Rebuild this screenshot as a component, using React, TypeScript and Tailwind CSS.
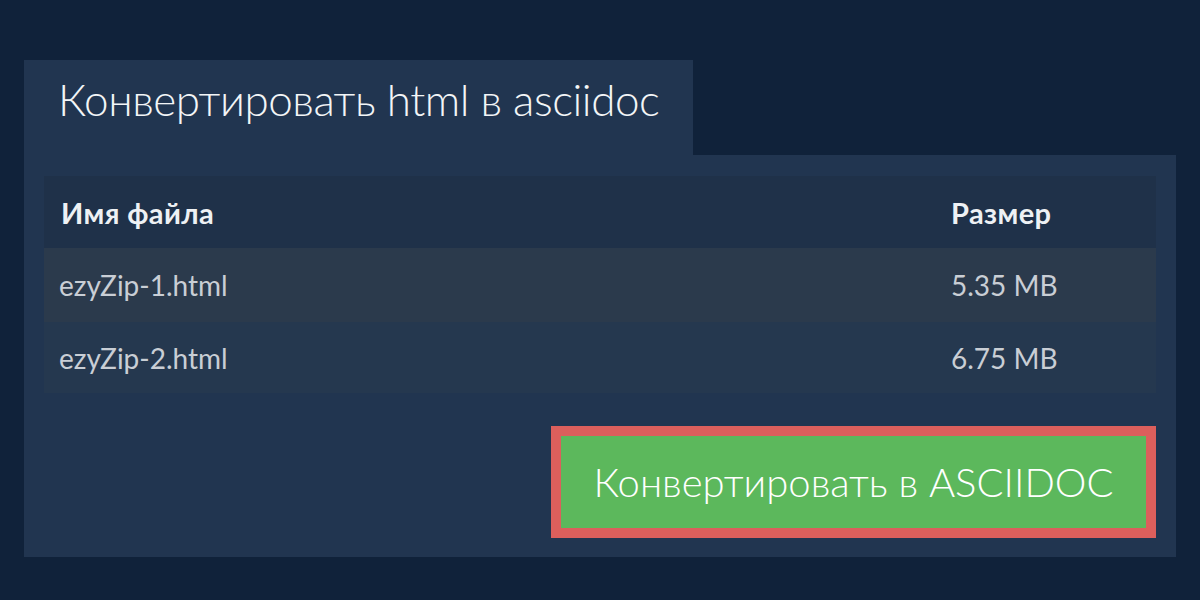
const files = [
  { name: "ezyZip-1.html", size: "5.35 MB", row: "bg-[#2b3a4c]" },
  { name: "ezyZip-2.html", size: "6.75 MB", row: "bg-[#25384f]" },
];

export default function App() {
  return (
    <div
      className="w-full h-[600px] bg-[#10223a] pt-[60px] px-6"
      style={{ fontFamily: "Lato, 'Open Sans', sans-serif" }}
    >
      {/* Tab header */}
      <div className="w-[669px] h-[95px] bg-[#213550] pl-[34px] pt-[17px]">
        <h1 className="text-[44px] font-light tracking-[-0.45px] text-[#f3f5f7] leading-none">
          Конвертировать html в asciidoc
        </h1>
      </div>

      {/* Panel */}
      <div className="bg-[#213550] px-5 pt-[21px] pb-[19px]">
        <div className="w-full">
          <div className="h-[72px] bg-[#1f3149] flex items-center pl-[17px] text-[29px] font-bold tracking-[0.4px] text-[#eef1f4] leading-none">
            <div className="flex-1">Имя файла</div>
            <div className="w-[205px]">Размер</div>
          </div>
          {files.map((f, i) => (
            <div
              key={i}
              className={`${f.row} ${i === 0 ? "h-[74px]" : "h-[71px]"} flex items-center pl-[15px] text-[28px] text-[#c9ced5] leading-none`}
            >
              <div className="flex-1">{f.name}</div>
              <div className="w-[205px]">{f.size}</div>
            </div>
          ))}
        </div>

        <div className="flex justify-end mt-[33px]">
          <button className="w-[605px] h-[112px] border-[10px] border-[#dc5f5c] bg-[#5cb85c] text-white text-[40px] font-light leading-none flex items-center justify-center">
            Конвертировать в ASCIIDOC
          </button>
        </div>
      </div>
    </div>
  );
}
